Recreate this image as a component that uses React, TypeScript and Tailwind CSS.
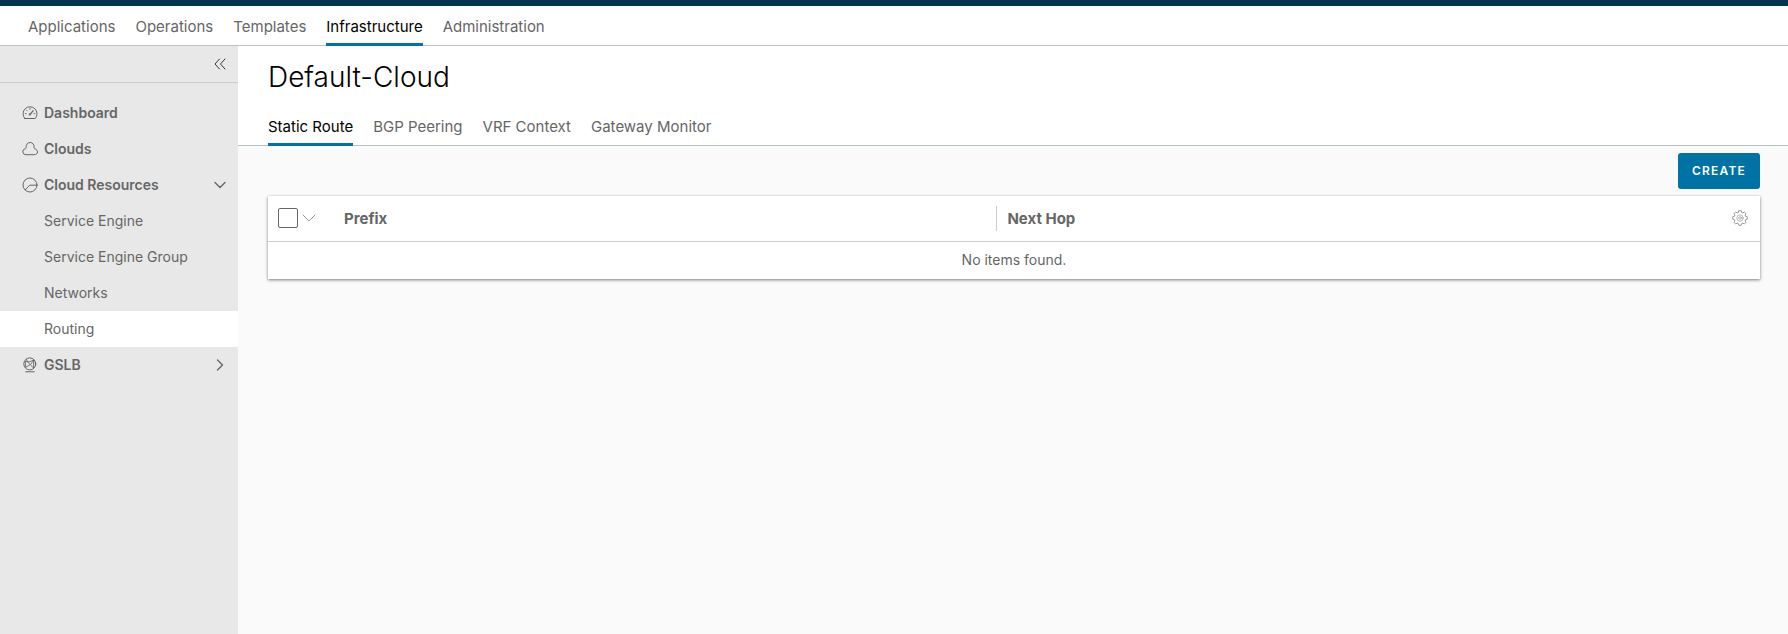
import React from "react";

type IconProps = { className?: string };

const stroke = {
  fill: "none",
  stroke: "currentColor",
  strokeLinecap: "round" as const,
  strokeLinejoin: "round" as const,
  "aria-hidden": true,
};

function DashboardIcon({ className }: IconProps) {
  return (
    <svg viewBox="0 0 16 16" className={className} {...stroke}>
      <path d="M2.800 13.500h10.400a7 7 0 1 0-10.400 0Z" />
      <path d="M7.900 9.600 11 5.800" strokeWidth="1.300" />
      <circle cx="7.700" cy="9.600" r="1" fill="currentColor" stroke="none" />
      <path d="M8 3.400v1M3.300 8.600h.8M12 8.600h.8M4.700 5.300l.5.5" strokeWidth="0.9" />
    </svg>
  );
}

function CloudIcon({ className }: IconProps) {
  return (
    <svg viewBox="0 0 16 16" className={className} {...stroke}>
      <path d="M3.600 13.700a3 3 0 0 1-.6-5.900c.9-.2 1.200-.6 1.100-1.500C3.900 3.600 5.700 1.500 8.100 1.500s4.300 2.100 4 4.700c-.1.900.1 1.400.9 1.700 1.600.5 2.500 1.700 2.500 3 0 1.600-1.200 2.800-3 2.800Z" />
    </svg>
  );
}

function ResourcesIcon({ className }: IconProps) {
  return (
    <svg viewBox="0 0 16 16" className={className} {...stroke}>
      <circle cx="8" cy="8" r="7" />
      <path d="M3.200 12.800 7.800 8.200h7" />
    </svg>
  );
}

function GlobeIcon({ className }: IconProps) {
  return (
    <svg viewBox="0 0 16 16" className={className} {...stroke}>
      <circle cx="7.800" cy="6.900" r="6" />
      <path d="M4.300 2.300C5.300 4.600 7.200 7 11.600 10.800M3.200 4.600l4 .2 4.600-1.600M11.800 3.200 8.200 7.800l-4.400 2.400M3.200 4.600l.6 5.600M11.800 3.200l-.2 7.600" strokeWidth="0.9" />
      <path d="M3.800 14.800h8.400" />
    </svg>
  );
}

function GearIcon({ className }: IconProps) {
  return (
    <svg viewBox="0 0 16 16" className={className} {...stroke}>
      <path d="M6.800.7h2.400l.4 1.700 1.200.5 1.500-.9 1.700 1.700-.9 1.500.5 1.200 1.700.4v2.400l-1.700.4-.5 1.200.9 1.500-1.700 1.700-1.500-.9-1.200.5-.4 1.700H6.800l-.4-1.700-1.200-.5-1.500.9L2 12.300l.9-1.500-.5-1.200L.7 9.200V6.800l1.700-.4.500-1.200L2 3.700 3.700 2l1.500.9 1.200-.5Z" />
      <circle cx="8" cy="8" r="3.200" strokeWidth="0.7" />
      <circle cx="8" cy="8" r="1.300" strokeWidth="0.7" />
    </svg>
  );
}

const mainNav = ["Applications", "Operations", "Templates", "Infrastructure", "Administration"];
const tabs = ["Static Route", "BGP Peering", "VRF Context", "Gateway Monitor"];
const resources = ["Service Engine", "Service Engine Group", "Networks", "Routing"];

function TabLink({ label, active }: { label: string; active: boolean }) {
  return (
    <a
      href="#"
      aria-current={active ? "page" : undefined}
      className={
        active
          ? "flex h-10 items-center border-b-[3px] border-[#0072a3] pt-1 text-black"
          : "flex h-10 items-center border-b-[3px] border-transparent pt-1 text-[#666]"
      }
    >
      {label}
    </a>
  );
}

export default function App() {
  return (
    <div className="flex min-h-screen flex-col bg-[#fafafa] font-['Inter',sans-serif] text-sm text-[#666]">
      <header className="bg-white">
        <div className="h-[6px] bg-[#00364d]" />
        <nav aria-label="Main" className="flex h-10 gap-5 px-7 text-[15px] shadow-[inset_0_-1px_0_#b8c4c4]">
          {mainNav.map((label) => (
            <TabLink key={label} label={label} active={label === "Infrastructure"} />
          ))}
        </nav>
      </header>

      <div className="flex grow">
        <aside className="w-[238px] shrink-0 bg-[#e8e8e8]">
          <div className="flex h-[37px] items-center justify-end border-b border-[#ccc] pr-3">
            <button type="button" aria-label="Collapse menu" className="text-[#333]">
              <svg viewBox="0 0 12 12" className="size-3" {...stroke}>
                <path d="M5.500 1 1 6l4.500 5M11 1 6.500 6l4.500 5" />
              </svg>
            </button>
          </div>
          <nav aria-label="Infrastructure" className="pt-3">
            <a href="#" className="flex h-9 items-center gap-[6px] pl-[22px] font-semibold">
              <DashboardIcon className="size-4" />
              Dashboard
            </a>
            <a href="#" className="flex h-9 items-center gap-[6px] pl-[22px] font-semibold">
              <CloudIcon className="size-4" />
              Clouds
            </a>
            <button type="button" aria-expanded="true" className="flex h-9 w-full items-center gap-[6px] pr-3 pl-[22px] font-semibold">
              <ResourcesIcon className="size-4" />
              Cloud Resources
              <svg viewBox="0 0 12 12" className="ml-auto size-3" {...stroke} strokeWidth="1.400">
                <path d="m1 3.500 5 5 5-5" />
              </svg>
            </button>
            {resources.map((label) => (
              <a
                key={label}
                href="#"
                className={
                  label === "Routing"
                    ? "flex h-9 items-center bg-white pl-11"
                    : "flex h-9 items-center pl-11"
                }
              >
                {label}
              </a>
            ))}
            <button type="button" aria-expanded="false" className="flex h-9 w-full items-center gap-[6px] pr-3 pl-[22px] font-semibold">
              <GlobeIcon className="size-4" />
              GSLB
              <svg viewBox="0 0 12 12" className="ml-auto size-3" {...stroke} strokeWidth="1.400">
                <path d="m3.500 1 5 5-5 5" />
              </svg>
            </button>
          </nav>
        </aside>

        <main className="min-w-0 grow">
          <div className="bg-white px-[30px] shadow-[inset_0_-1px_0_#b8c4c4]">
            <h1 className="pt-[13px] text-[28px] leading-9 font-light text-black">Default-Cloud</h1>
            <nav aria-label="Routing" className="flex gap-5 pt-[11px] text-[15px]">
              {tabs.map((label) => (
                <TabLink key={label} label={label} active={label === "Static Route"} />
              ))}
            </nav>
          </div>

          <div className="pt-[7px] pr-7 pl-[30px]">
            <div className="flex justify-end">
              <button type="button" className="h-9 rounded-[3px] bg-[#0072a3] px-[14px] text-xs font-semibold tracking-widest text-white">
                CREATE
              </button>
            </div>
            <table className="mt-[7px] w-full table-fixed bg-white shadow-[0_1px_3px_rgba(0,0,0,0.5)]">
              <thead>
                <tr className="h-[45px] border-b border-[#ccc] text-left text-[15px]">
                  <th className="w-[66px] pl-[10px]">
                    <div className="flex items-center gap-1">
                      <input
                        type="checkbox"
                        aria-label="Select all"
                        className="size-5 appearance-none rounded-[2px] border border-[#666] bg-white"
                      />
                      <button type="button" aria-label="Selection options" className="text-[#999]">
                        <svg viewBox="0 0 14 14" className="size-[14px]" {...stroke}>
                          <path d="m1 4 6 6 6-6" />
                        </svg>
                      </button>
                    </div>
                  </th>
                  <th className="w-[44.4%] pl-[10px] font-bold">Prefix</th>
                  <th>
                    <div className="flex h-[25px] items-center border-l border-[#ccc] pl-[10px] font-bold">Next Hop</div>
                  </th>
                  <th className="w-12 pr-3">
                    <button type="button" aria-label="Table settings" className="ml-auto block text-[#999]">
                      <GearIcon className="size-4" />
                    </button>
                  </th>
                </tr>
              </thead>
              <tbody>
                <tr className="h-[38px]">
                  <td colSpan={4} className="text-center">No items found.</td>
                </tr>
              </tbody>
            </table>
          </div>
        </main>
      </div>
    </div>
  );
}
